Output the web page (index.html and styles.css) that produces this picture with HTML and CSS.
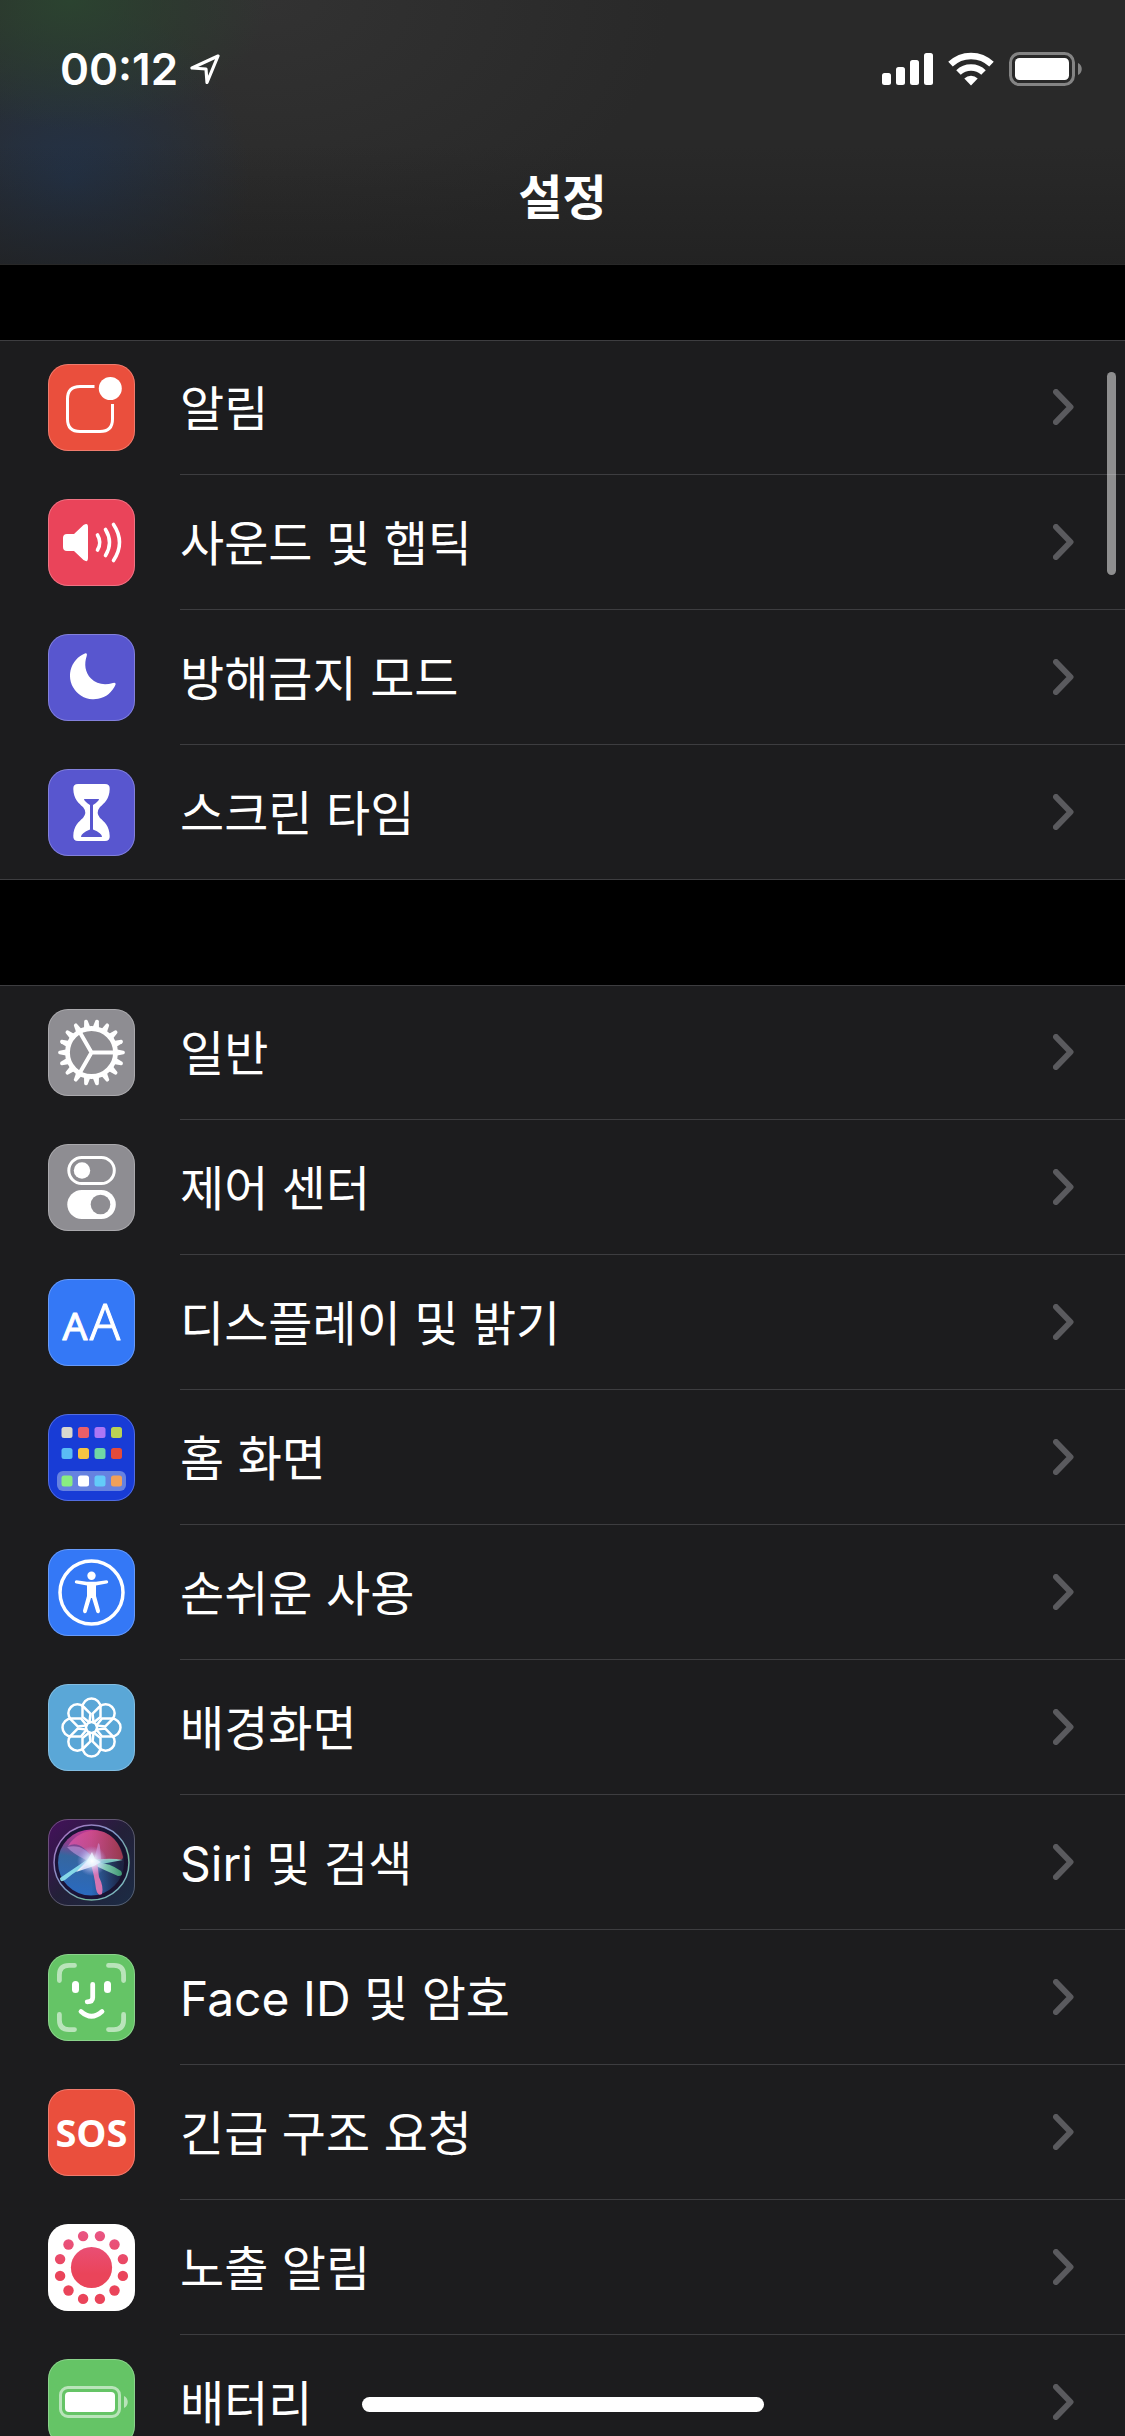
FILE: index.html
```html
<!DOCTYPE html>
<html lang="ko">
<head>
    <meta charset="utf-8">
    <meta name="viewport" content="width=device-width, initial-scale=1">
    <title>설정</title>
    <link rel="stylesheet" href="styles.css">
</head>
<body>
    <!-- Shared shapes -->
    <svg class="sprite" aria-hidden="true">
        <symbol id="chevron" viewBox="0 0 21 36">
            <path d="M3 3l14.500 15L3 33" fill="none" stroke="#5a5a5e" stroke-width="6" stroke-linecap="round" stroke-linejoin="round"/>
        </symbol>
    </svg>

    <div class="screen">
        <!-- Header -->
        <header class="header">
            <div class="status-bar">
                <div class="status-left">
                    <span class="time">00:12</span>
                    <svg class="location" viewBox="0 0 30 30">
                        <path d="M28 2L2 14l14 1 1 13.500z" fill="none" stroke="#fff" stroke-width="3.200" stroke-linejoin="round"/>
                    </svg>
                </div>
                <div class="status-right">
                    <svg class="signal" viewBox="0 0 51 34" fill="#fff">
                        <rect x="0" y="21" width="9" height="12" rx="2.500"/>
                        <rect x="14" y="15" width="9" height="18" rx="2.500"/>
                        <rect x="28" y="8" width="9" height="25" rx="2.500"/>
                        <rect x="42" y="1" width="9" height="32" rx="2.500"/>
                    </svg>
                    <svg class="wifi" viewBox="0 0 46 34">
                        <g fill="none" stroke="#fff" stroke-width="6.500">
                            <path d="M2.500 12.200a29.500 29.500 0 0 1 41 0"/>
                            <path d="M10.500 20.500a18 18 0 0 1 25 0"/>
                        </g>
                        <path d="M23 33.500l-6.700-7a9.600 9.600 0 0 1 13.400 0z" fill="#fff"/>
                    </svg>
                    <svg class="battery" viewBox="0 0 74 34">
                        <rect x="1.500" y="1.500" width="63" height="31" rx="9" fill="none" stroke="#848484" stroke-width="3"/>
                        <rect x="6" y="6" width="54" height="22" rx="4.500" fill="#fff"/>
                        <path d="M69 11c5 2 5 10 0 12z" fill="#848484"/>
                    </svg>
                </div>
            </div>
            <h1 class="title">설정</h1>
        </header>

        <!-- Settings list -->
        <main class="settings">
            <ul class="group">
                <li><a class="row" href="#notifications">
                    <svg class="icon red" viewBox="0 0 87 87">
                        <path d="M46.500 22.500H32Q19.500 22.500 19.500 35V55Q19.500 67.500 32 67.500H52Q64.500 67.500 64.500 55V40" fill="none" stroke="#fff" stroke-width="3"/>
                        <circle cx="62.300" cy="24.500" r="11.500" fill="#fff"/>
                    </svg>
                    <span class="cell"><span class="label">알림</span><svg class="chevron"><use href="#chevron"/></svg></span>
                </a></li>
                <li><a class="row" href="#sounds">
                    <svg class="icon pink" viewBox="0 0 87 87">
                        <path d="M19 35h7L35.500 26Q40 23 40 28V59Q40 64 35.500 61L26 52H19q-4 0-4-4V39q0-4 4-4z" fill="#fff"/>
                        <g fill="none" stroke="#fff" stroke-width="3.600" stroke-linecap="round">
                            <path d="M49.500 36q4.500 7.500 0 15"/>
                            <path d="M57.500 30.500q8 13 0 26"/>
                            <path d="M65.500 25.500q12 18 0 36"/>
                        </g>
                    </svg>
                    <span class="cell"><span class="label">사운드 및 햅틱</span><svg class="chevron"><use href="#chevron"/></svg></span>
                </a></li>
                <li><a class="row" href="#do-not-disturb">
                    <svg class="icon indigo" viewBox="0 0 87 87">
                        <path d="M37.500 19.300A23.700 23.700 0 1 0 67.600 50.500Q68 48 65 49C56 51.500 48.500 50 43 44.500C37 38.500 36 30 38.700 22Q39.500 19 37.500 19.300z" fill="#fff"/>
                    </svg>
                    <span class="cell"><span class="label">방해금지 모드</span><svg class="chevron"><use href="#chevron"/></svg></span>
                </a></li>
                <li><a class="row" href="#screen-time">
                    <svg class="icon indigo" viewBox="0 0 87 87">
                        <path fill="#fff" fill-rule="evenodd" d="M30 15H57Q62 15 61.700 20C61.500 30 56 34.500 52 38Q47.500 43.500 52 49C56 52.500 61.500 57 61.700 67Q62 72 57 72H30Q25 72 25.300 67C25.500 57 31 52.500 35 49Q39.500 43.500 35 38C31 34.500 25.500 30 25.300 20Q25 15 30 15zM36 30Q36 32 42 36V60.500Q33 64 33 68H54Q54 64 45 60.500V36Q51 32 51 30z"/>
                    </svg>
                    <span class="cell"><span class="label">스크린 타임</span><svg class="chevron"><use href="#chevron"/></svg></span>
                </a></li>
            </ul>

            <ul class="group">
                <li><a class="row" href="#general">
                    <svg class="icon gray" viewBox="0 0 87 87">
                        <defs>
                            <path id="tooth" d="M68 40.200L75.500 41.700Q76.800 42 76.800 43.500Q76.800 45 75.500 45.300L68 46.800z"/>
                            <g id="teeth">
                                <use href="#tooth"/>
                                <use href="#tooth" transform="rotate(20 43.500 43.500)"/>
                                <use href="#tooth" transform="rotate(40 43.500 43.500)"/>
                                <use href="#tooth" transform="rotate(60 43.500 43.500)"/>
                                <use href="#tooth" transform="rotate(80 43.500 43.500)"/>
                                <use href="#tooth" transform="rotate(100 43.500 43.500)"/>
                            </g>
                        </defs>
                        <g fill="#fff">
                            <use href="#teeth"/>
                            <use href="#teeth" transform="rotate(120 43.500 43.500)"/>
                            <use href="#teeth" transform="rotate(240 43.500 43.500)"/>
                        </g>
                        <g fill="none" stroke="#fff">
                            <circle cx="43.500" cy="43.500" r="24" stroke-width="4.800"/>
                            <path d="M43.500 43.500H67M43.500 43.500L31.700 23.100M43.500 43.500L31.700 63.900" stroke-width="4"/>
                        </g>
                    </svg>
                    <span class="cell"><span class="label">일반</span><svg class="chevron"><use href="#chevron"/></svg></span>
                </a></li>
                <li><a class="row" href="#control-center">
                    <svg class="icon gray" viewBox="0 0 87 87">
                        <rect x="20.800" y="13.500" width="45.500" height="26" rx="13" fill="none" stroke="#fff" stroke-width="3"/>
                        <circle cx="34" cy="26.500" r="8.200" fill="#fff"/>
                        <rect x="19.300" y="46" width="48.500" height="29" rx="14.500" fill="#fff"/>
                        <circle cx="52.500" cy="60.500" r="9.800" fill="#8e8d92"/>
                    </svg>
                    <span class="cell"><span class="label">제어 센터</span><svg class="chevron"><use href="#chevron"/></svg></span>
                </a></li>
                <li><a class="row" href="#display">
                    <svg class="icon blue" viewBox="0 0 87 87">
                        <g class="letters" text-anchor="middle">
                            <text class="small" x="27" y="61" font-size="39">A</text>
                            <text x="57" y="61" font-size="50">A</text>
                        </g>
                    </svg>
                    <span class="cell"><span class="label">디스플레이 및 밝기</span><svg class="chevron"><use href="#chevron"/></svg></span>
                </a></li>
                <li><a class="row" href="#home-screen">
                    <svg class="icon navy" viewBox="0 0 87 87">
                        <rect x="9" y="57" width="69" height="20" rx="6" fill="#6682e0"/>
                        <rect x="13.500" y="13" width="11" height="11" rx="2.500" fill="#d9d8cf"/>
                        <rect x="30" y="13" width="11" height="11" rx="2.500" fill="#eb5f69"/>
                        <rect x="46.500" y="13" width="11" height="11" rx="2.500" fill="#ad76f5"/>
                        <rect x="63" y="13" width="11" height="11" rx="2.500" fill="#b9d255"/>
                        <rect x="13.500" y="34" width="11" height="11" rx="2.500" fill="#5abcf5"/>
                        <rect x="30" y="34" width="11" height="11" rx="2.500" fill="#f5c443"/>
                        <rect x="46.500" y="34" width="11" height="11" rx="2.500" fill="#71d6a5"/>
                        <rect x="63" y="34" width="11" height="11" rx="2.500" fill="#e44b3a"/>
                        <rect x="13.500" y="61.500" width="11" height="11" rx="2.500" fill="#89ee80"/>
                        <rect x="30" y="61.500" width="11" height="11" rx="2.500" fill="#fff"/>
                        <rect x="46.500" y="61.500" width="11" height="11" rx="2.500" fill="#63cbf9"/>
                        <rect x="63" y="61.500" width="11" height="11" rx="2.500" fill="#f0a05a"/>
                    </svg>
                    <span class="cell"><span class="label">홈 화면</span><svg class="chevron"><use href="#chevron"/></svg></span>
                </a></li>
                <li><a class="row" href="#accessibility">
                    <svg class="icon blue" viewBox="0 0 87 87">
                        <circle cx="43.500" cy="43.500" r="31.500" fill="none" stroke="#fff" stroke-width="3.500"/>
                        <circle cx="43.500" cy="26.700" r="4.200" fill="#fff"/>
                        <path d="M28.500 31.300L39 32.800H48L58.500 31.300Q60.200 31.500 60.200 33Q60.200 34.200 58.800 34.500L48 36.500V47L52 61.500Q52.200 63.600 50.600 64.200Q49 64.500 48.300 63L44 49H43L38.700 63Q38 64.500 36.400 64.200Q34.800 63.600 35 61.500L39 47V36.500L28.200 34.500Q26.800 34.200 26.800 33Q26.800 31.500 28.500 31.300z" fill="#fff"/>
                    </svg>
                    <span class="cell"><span class="label">손쉬운 사용</span><svg class="chevron"><use href="#chevron"/></svg></span>
                </a></li>
                <li><a class="row" href="#wallpaper">
                    <svg class="icon sky" viewBox="0 0 87 87">
                        <defs>
                            <path id="petal" d="M42 39L34.500 33V23.500a9 9 0 0 1 18 0V33L45 39"/>
                        </defs>
                        <g fill="none" stroke="#fff" stroke-width="2.500">
                            <use href="#petal"/>
                            <use href="#petal" transform="rotate(45 43.500 43.500)"/>
                            <use href="#petal" transform="rotate(90 43.500 43.500)"/>
                            <use href="#petal" transform="rotate(135 43.500 43.500)"/>
                            <use href="#petal" transform="rotate(180 43.500 43.500)"/>
                            <use href="#petal" transform="rotate(225 43.500 43.500)"/>
                            <use href="#petal" transform="rotate(270 43.500 43.500)"/>
                            <use href="#petal" transform="rotate(315 43.500 43.500)"/>
                            <circle cx="43.500" cy="43.500" r="5.500"/>
                        </g>
                    </svg>
                    <span class="cell"><span class="label">배경화면</span><svg class="chevron"><use href="#chevron"/></svg></span>
                </a></li>
                <li><a class="row" href="#siri">
                    <svg class="icon siri" viewBox="0 0 87 87">
                        <defs>
                            <linearGradient id="orb" x1="0.550" y1="0" x2="0.400" y2="1">
                                <stop offset="0" stop-color="#c23a96"/>
                                <stop offset="0.250" stop-color="#8c3f8e"/>
                                <stop offset="0.450" stop-color="#35669f"/>
                                <stop offset="1" stop-color="#2a6abf"/>
                            </linearGradient>
                            <linearGradient id="shade" x1="0" y1="0" x2="1" y2="0">
                                <stop offset="0.500" stop-color="#17142b" stop-opacity="0"/>
                                <stop offset="0.900" stop-color="#17142b" stop-opacity="0.800"/>
                            </linearGradient>
                            <linearGradient id="rim" x1="0" y1="0" x2="1" y2="1">
                                <stop offset="0" stop-color="#b06cc0"/>
                                <stop offset="0.500" stop-color="#7c9bc4"/>
                                <stop offset="0.700" stop-color="#76b79a"/>
                                <stop offset="1" stop-color="#7fb4dc"/>
                            </linearGradient>
                            <linearGradient id="coral" x1="0" y1="0" x2="1" y2="0">
                                <stop offset="0" stop-color="#e058b0"/>
                                <stop offset="1" stop-color="#c04353"/>
                            </linearGradient>
                            <linearGradient id="mint" x1="0" y1="0" x2="1" y2="0">
                                <stop offset="0" stop-color="#c9fff8"/>
                                <stop offset="1" stop-color="#3f9d72"/>
                            </linearGradient>
                            <radialGradient id="glow">
                                <stop offset="0" stop-color="#fff"/>
                                <stop offset="0.300" stop-color="#e6f5ff" stop-opacity="0.800"/>
                                <stop offset="1" stop-color="#b9a5ff" stop-opacity="0"/>
                            </radialGradient>
                        </defs>
                        <circle cx="43.500" cy="43.500" r="38" fill="#1b1338"/>
                        <circle cx="43" cy="43.500" r="33" fill="url(#orb)"/>
                        <circle cx="43.500" cy="43.500" r="36" fill="url(#shade)"/>
                        <path d="M20 27C35 4 68 6 75 38Q75 42 66 41L46 42Q33 20 20 27z" fill="url(#coral)" opacity="0.750"/>
                        <path d="M19 28Q36 24 46 41L50 25Q52 21 53 40Q44 46 36 40Q24 34 19 28z" fill="#d8a6ee" opacity="0.500"/>
                        <path d="M12 59L40 40Q46 37 48 43Q32 48 17 61Q12 64 12 59z" fill="#8fe4ee" opacity="0.900"/>
                        <path d="M42 44Q60 42 73 52Q76 57 70 57Q56 51 42 44z" fill="url(#mint)" opacity="0.950"/>
                        <path d="M40 42Q60 38 75 41L48 46z" fill="#8de6d6" opacity="0.800"/>
                        <path d="M42 43Q46 54 48 70Q50 78 54 75Q56 68 51 58Q50 50 49 42z" fill="#e978b4" opacity="0.900"/>
                        <path d="M44 33L47 40L53 43L46 47L28 53L39 42z" fill="#fff" opacity="0.850"/>
                        <circle cx="44" cy="42" r="15" fill="url(#glow)"/>
                        <circle cx="43.500" cy="43.500" r="37.500" fill="none" stroke="url(#rim)" stroke-width="1.500"/>
                    </svg>
                    <span class="cell"><span class="label">Siri 및 검색</span><svg class="chevron"><use href="#chevron"/></svg></span>
                </a></li>
                <li><a class="row" href="#face-id">
                    <svg class="icon green" viewBox="0 0 87 87">
                        <g fill="none" stroke="#fff" stroke-width="4.800" stroke-linecap="round">
                            <path opacity="0.550" d="M11.400 26.500V21q0-9.600 9.600-9.600h5.500M60.500 11.400H66q9.600 0 9.600 9.600v5.500M75.600 60.500V66q0 9.600-9.600 9.600h-5.500M26.500 75.600H21q-9.600 0-9.600-9.600v-5.500"/>
                            <path d="M44.700 30.300V43.500q0 4.300-5.500 4.300"/>
                            <path d="M33 57.500q10.500 9.500 21 0"/>
                        </g>
                        <rect x="24" y="27" width="7" height="12" rx="3.500" fill="#fff"/>
                        <rect x="56" y="27" width="7" height="12" rx="3.500" fill="#fff"/>
                    </svg>
                    <span class="cell"><span class="label">Face ID 및 암호</span><svg class="chevron"><use href="#chevron"/></svg></span>
                </a></li>
                <li><a class="row" href="#sos">
                    <span class="icon red sos">SOS</span>
                    <span class="cell"><span class="label">긴급 구조 요청</span><svg class="chevron"><use href="#chevron"/></svg></span>
                </a></li>
                <li><a class="row" href="#exposure">
                    <svg class="icon white" viewBox="0 0 87 87">
                        <defs>
                            <linearGradient id="rose" gradientUnits="userSpaceOnUse" x1="0" y1="8" x2="0" y2="50">
                                <stop offset="0" stop-color="#e95583"/>
                                <stop offset="1" stop-color="#ea445a"/>
                            </linearGradient>
                        </defs>
                        <g fill="url(#rose)">
                            <circle cx="43.500" cy="43.500" r="20.600"/>
                            <circle cx="35.100" cy="12.100" r="5.200"/>
                            <circle cx="51.900" cy="12.100" r="5.200"/>
                            <circle cx="66.500" cy="20.500" r="5.200"/>
                            <circle cx="74.900" cy="35.100" r="5.200"/>
                            <circle cx="74.900" cy="51.900" r="5.200"/>
                            <circle cx="66.500" cy="66.500" r="5.200"/>
                            <circle cx="51.900" cy="74.900" r="5.200"/>
                            <circle cx="35.100" cy="74.900" r="5.200"/>
                            <circle cx="20.500" cy="66.500" r="5.200"/>
                            <circle cx="12.100" cy="51.900" r="5.200"/>
                            <circle cx="12.100" cy="35.100" r="5.200"/>
                            <circle cx="20.500" cy="20.500" r="5.200"/>
                        </g>
                    </svg>
                    <span class="cell"><span class="label">노출 알림</span><svg class="chevron"><use href="#chevron"/></svg></span>
                </a></li>
                <li><a class="row" href="#battery">
                    <svg class="icon green" viewBox="0 0 87 87">
                        <g opacity="0.550">
                            <rect x="12.500" y="28.500" width="59" height="29" rx="7.500" fill="none" stroke="#fff" stroke-width="3"/>
                            <path d="M76 37c5 2 5 10 0 12z" fill="#fff"/>
                        </g>
                        <rect x="17" y="33" width="50" height="20" rx="4" fill="#fff"/>
                    </svg>
                    <span class="cell"><span class="label">배터리</span><svg class="chevron"><use href="#chevron"/></svg></span>
                </a></li>
            </ul>
        </main>

        <div class="scrollbar"></div>
        <div class="home-indicator"></div>
    </div>
</body>
</html>
```
FILE: styles.css
```css
:root {
    --background: #000;
    --card-bg: #1c1c1e;
    --separator: #3d3d40;
    --text: #fff;
    --row-height: 135px;
}

* {
    margin: 0;
    padding: 0;
    box-sizing: border-box;
}

body {
    font-family: Inter, "Noto Sans CJK KR", sans-serif;
    background-color: var(--background);
    color: var(--text);
}

.sprite {
    display: none;
}

.screen {
    position: relative;
    display: flex;
    flex-direction: column;
    height: 100vh;
    overflow: hidden;
}

/* Header */
.header {
    flex: none;
    border-bottom: 1px solid #282828;
    background:
        linear-gradient(to bottom, transparent 55%, rgba(30, 30, 30, 0.6)),
        radial-gradient(ellipse 200px 130px at 70px 0, #2b4330, transparent),
        radial-gradient(ellipse 180px 180px at 70px 180px, #233247, transparent),
        radial-gradient(ellipse 400px 260px at 270px 0, #323232, transparent),
        #292929;
}

.status-bar {
    display: flex;
    justify-content: space-between;
    align-items: center;
    height: 138px;
    padding: 0 42px 0 60px;
}

.status-left {
    display: flex;
    align-items: center;
    gap: 12px;
}

.time {
    font-size: 44px;
    font-weight: 600;
    line-height: 56px;
}

.location {
    width: 30px;
    height: 30px;
}

.status-right {
    display: flex;
    align-items: center;
    gap: 15px;
}

.signal {
    width: 51px;
    height: 34px;
}

.wifi {
    width: 46px;
    height: 34px;
}

.battery {
    width: 74px;
    height: 34px;
}

.title {
    height: 126px;
    font-size: 48px;
    font-weight: 600;
    line-height: 120px;
    text-align: center;
}

/* Settings list */
.settings {
    flex: 1;
    min-height: 0;
    overflow: hidden;
    padding-top: 75px;
}

.group {
    list-style: none;
    background-color: var(--card-bg);
    box-shadow: inset 0 1px 0 var(--separator), inset 0 -1px 0 var(--separator);
    margin-bottom: 105px;
}

.row {
    display: flex;
    align-items: center;
    gap: 45px;
    height: var(--row-height);
    padding-left: 48px;
    color: var(--text);
    text-decoration: none;
}

.cell {
    flex: 1;
    display: flex;
    justify-content: space-between;
    align-items: center;
    height: 100%;
    padding-right: 51px;
    border-bottom: 1px solid var(--separator);
}

.group li:last-child .cell {
    border-bottom-color: transparent;
}

.label {
    padding-top: 4px;
    font-size: 48px;
    line-height: 72px;
}

.chevron {
    width: 21px;
    height: 36px;
}

/* Icons */
.icon {
    flex: none;
    width: 87px;
    height: 87px;
    border-radius: 20px;
    outline: 1px solid rgba(255, 255, 255, 0.25);
    outline-offset: -1px;
}

.red {
    background-color: #ea4f3d;
}

.pink {
    background-color: #ea445a;
}

.indigo {
    background-color: #5856cf;
}

.gray {
    background-color: #8e8d92;
}

.blue {
    background-color: #3478f6;
}

.navy {
    background-color: #183cd6;
}

.sky {
    background-color: #5aa7d7;
}

.green {
    background-color: #65c466;
}

.white {
    background-color: #fff;
}

.siri {
    background: linear-gradient(to bottom right, #45105c, #232038 50%, #1b2c45);
}

.letters {
    font-family: "Noto Sans", sans-serif;
    font-weight: 300;
    fill: #fff;
    stroke: #fff;
    stroke-width: 1px;
    stroke-linejoin: round;
}

.letters .small {
    font-weight: 400;
}

.sos {
    font-family: "Open Sans", sans-serif;
    font-size: 38px;
    font-weight: 700;
    line-height: 87px;
    text-align: center;
}

/* Overlays */
.scrollbar {
    position: absolute;
    top: 372px;
    right: 9px;
    width: 9px;
    height: 203px;
    border-radius: 5px;
    background-color: rgba(255, 255, 255, 0.5);
}

.home-indicator {
    position: absolute;
    bottom: 24px;
    left: 50%;
    width: 402px;
    height: 15px;
    border-radius: 8px;
    background-color: #fff;
    transform: translateX(-50%);
}
```
